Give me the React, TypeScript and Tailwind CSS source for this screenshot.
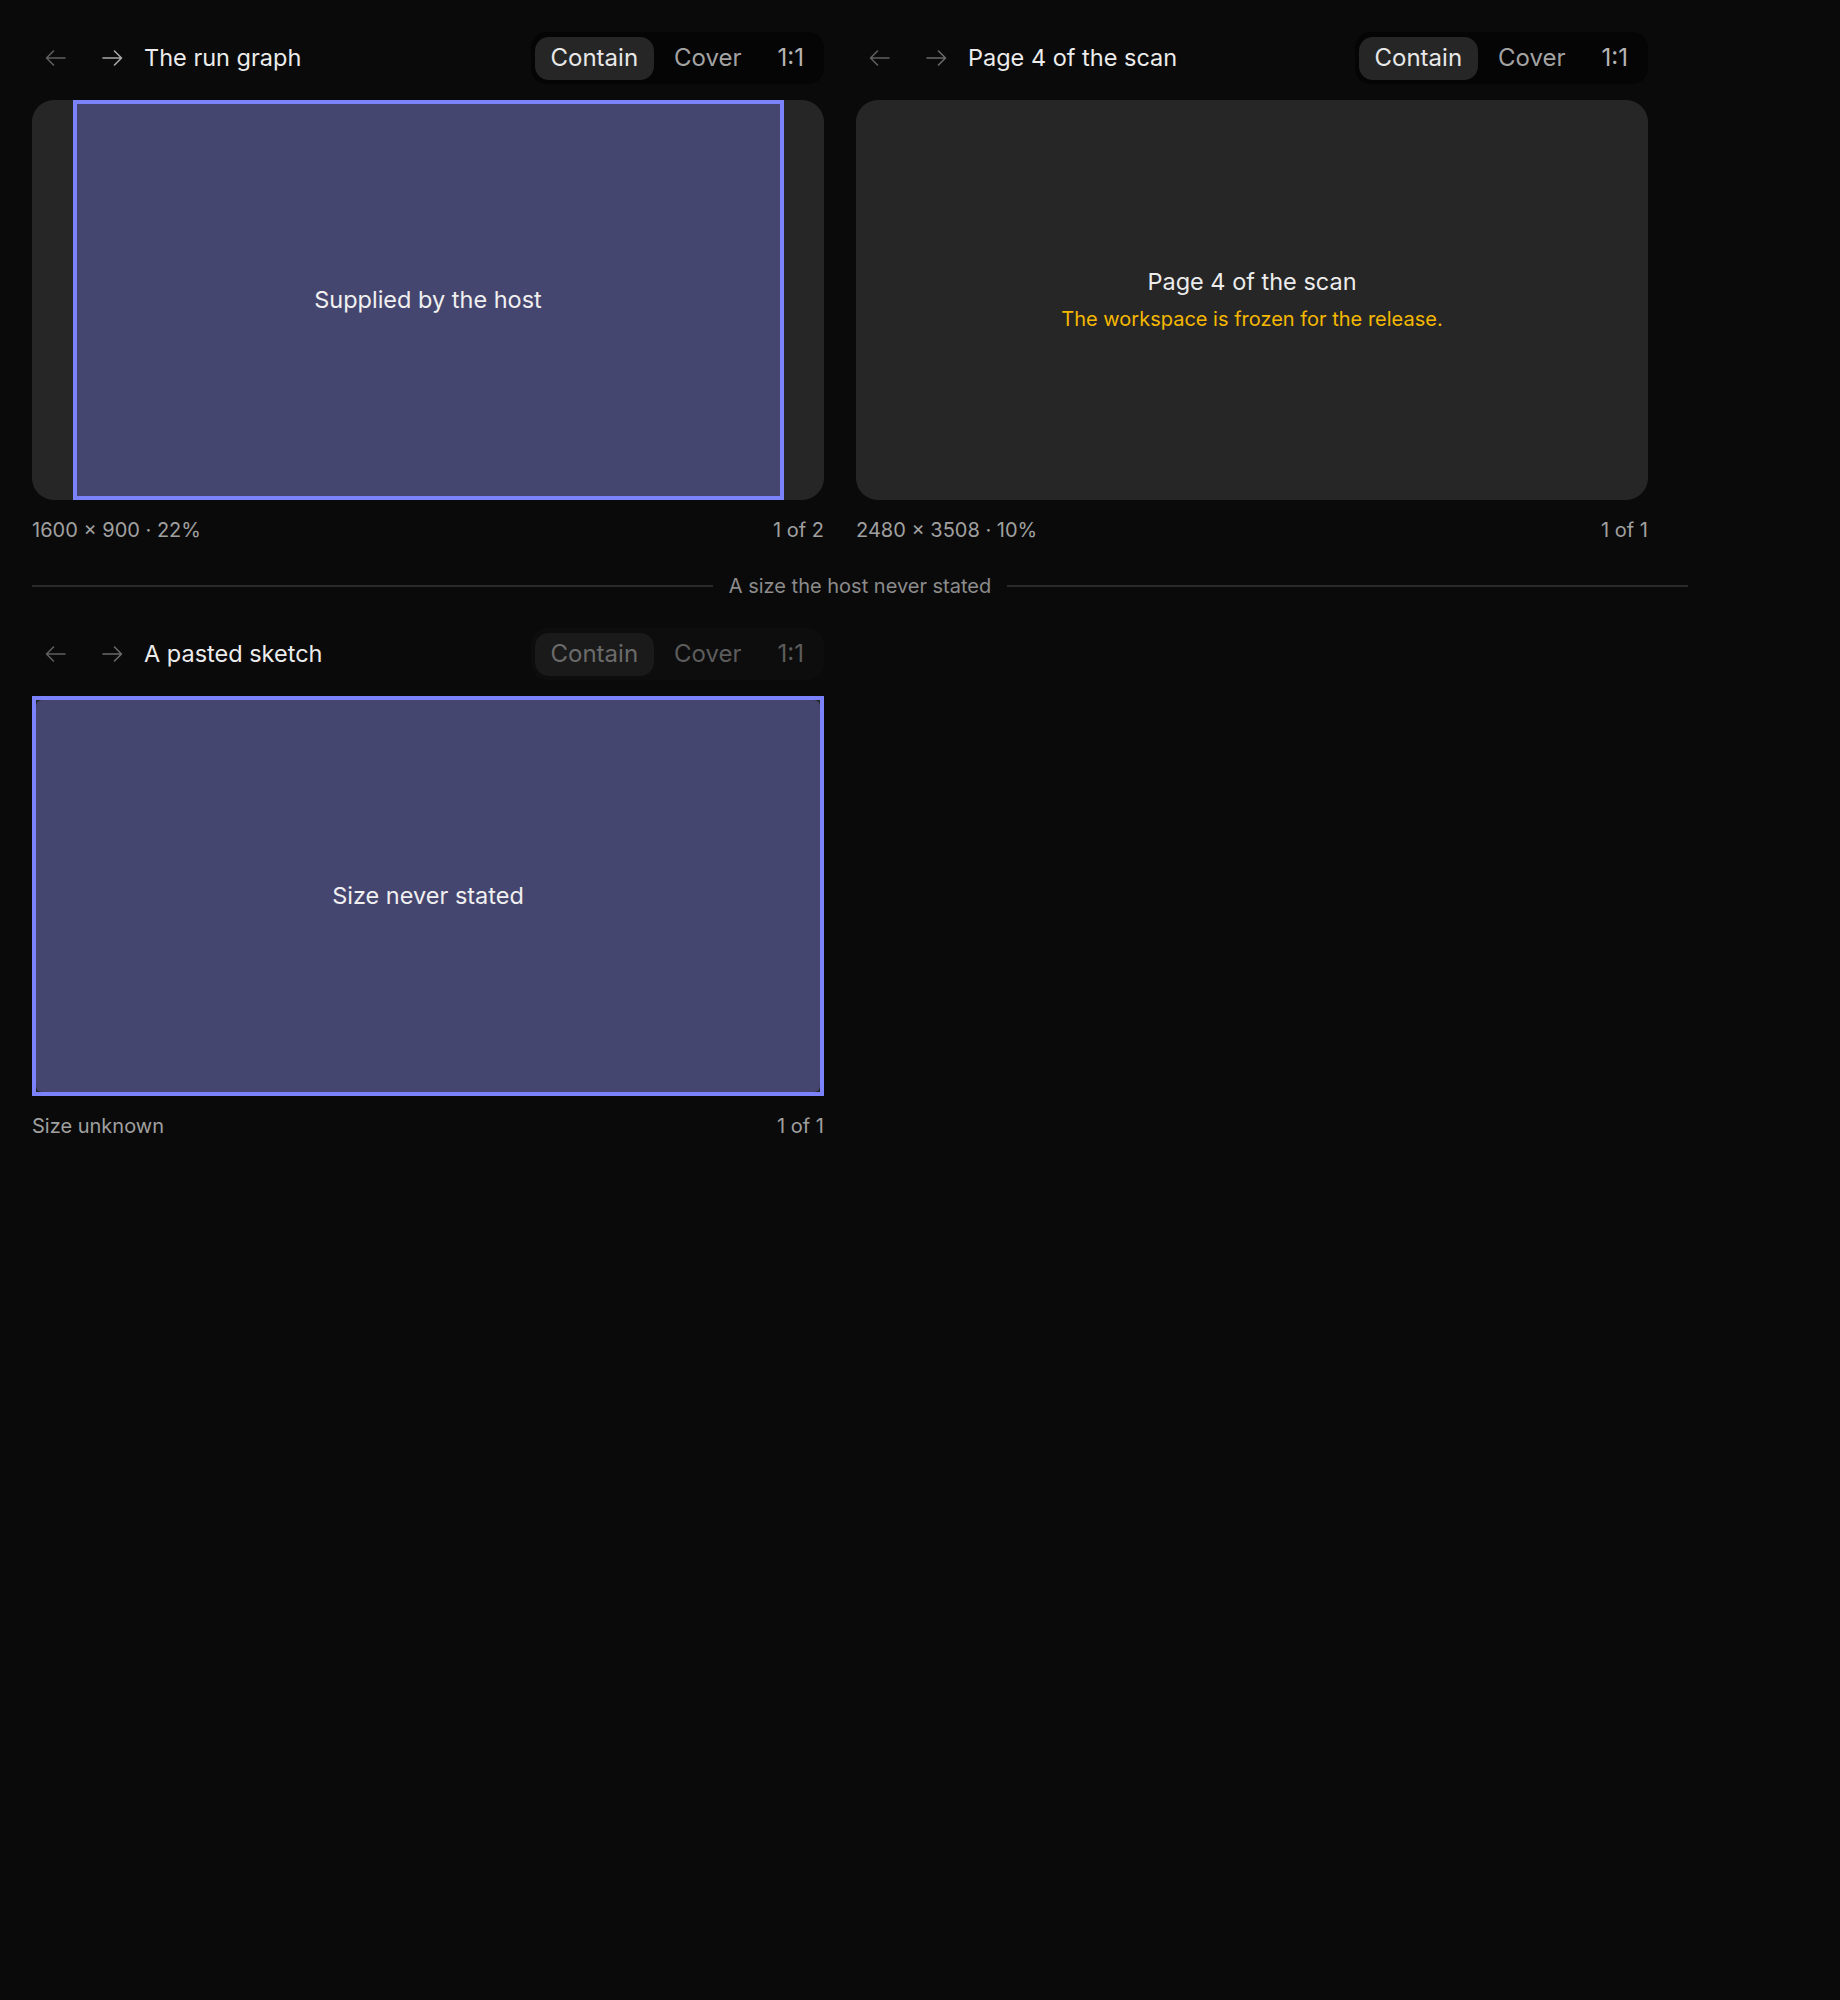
type Fit = "Contain" | "Cover" | "1:1";

const fits: Fit[] = ["Contain", "Cover", "1:1"];

function Arrow({ dir }: { dir: "left" | "right" }) {
  return (
    <svg width="21" height="16" viewBox="0 0 21 16" fill="none" stroke="currentColor" strokeWidth="1.6" strokeLinecap="round" strokeLinejoin="round">
      {dir === "left" ? (
        <path d="M20 8H1.5M8.5 1L1.5 8L8.5 15" />
      ) : (
        <path d="M1 8H19.5M12.5 1L19.5 8L12.5 15" />
      )}
    </svg>
  );
}

function FitSwitch({ active, disabled }: { active: Fit; disabled?: boolean }) {
  return (
    <div className={`flex h-[52px] items-center gap-1 rounded-2xl p-1 ${disabled ? "bg-[#0d0d0d]" : "bg-[#050505]"}`}>
      {fits.map((f) => {
        const on = f === active;
        let tone = "";
        if (disabled) tone = on ? "bg-[#1a1a1a] text-[#6b6b6b]" : "text-[#5c5c5c]";
        else tone = on ? "bg-[#262626] text-[#e8e8e8]" : f === "1:1" ? "text-[#b5b5b5]" : "text-[#a3a3a3]";
        return (
          <button key={f} className={`h-[43px] rounded-[14px] px-4 text-[24px] leading-none ${tone}`}>
            {f}
          </button>
        );
      })}
    </div>
  );
}

function Toolbar({ title, nextOn, disabled }: { title: string; nextOn: boolean; disabled?: boolean }) {
  return (
    <div className="flex h-[52px] items-center justify-between">
      <div className="flex items-center pl-[13px]">
        <span className="text-[#5f5f5f]">
          <Arrow dir="left" />
        </span>
        <span className={`ml-[36px] ${nextOn ? "text-[#a8a8a8]" : "text-[#6a6a6a]"}`}>
          <Arrow dir="right" />
        </span>
        <span className="ml-[21px] text-[23.5px] text-[#ececec]">{title}</span>
      </div>
      <FitSwitch active="Contain" disabled={disabled} />
    </div>
  );
}

function Footer({ left, right }: { left: string; right: string }) {
  return (
    <div className="mt-4 flex justify-between text-[20px] leading-7 text-[#a0a0a0]">
      <span>{left}</span>
      <span>{right}</span>
    </div>
  );
}

export default function App() {
  return (
    <div
      className="min-h-[2000px] bg-[#0a0a0a] px-8 pt-8"
      style={{ fontFamily: "Inter, 'Noto Sans', sans-serif" }}
    >
      <div className="flex w-[1656px] flex-col gap-7">
        <div className="flex flex-wrap gap-8">
          <section className="w-[792px]">
            <Toolbar title="The run graph" nextOn />
            <div className="mt-4 flex h-[400px] justify-center overflow-hidden rounded-[22px] bg-[#262626]">
              <div className="flex h-full w-[711px] items-center justify-center border-4 border-[#7c82fc] bg-[#45466f] text-[23.5px] text-[#f0f0f0]">
                Supplied by the host
              </div>
            </div>
            <Footer left="1600 × 900 · 22%" right="1 of 2" />
          </section>

          <section className="w-[792px]">
            <Toolbar title="Page 4 of the scan" nextOn={false} />
            <div className="mt-4 flex h-[400px] flex-col items-center justify-center rounded-[22px] bg-[#262626]">
              <div className="text-[23.5px] leading-7 text-[#ececec]">Page 4 of the scan</div>
              <div className="mt-[9px] text-[20px] leading-7 text-[#f5b800]">The workspace is frozen for the release.</div>
            </div>
            <Footer left="2480 × 3508 · 10%" right="1 of 1" />
          </section>
        </div>

        <div className="flex items-center gap-4">
          <div className="h-[2px] flex-1 bg-[#2a2a2a]" />
          <span className="text-[20px] leading-7 text-[#8c8c8c]">A size the host never stated</span>
          <div className="h-[2px] flex-1 bg-[#2a2a2a]" />
        </div>

        <section className="w-[792px]">
          <Toolbar title="A pasted sketch" nextOn={false} disabled />
          <div className="mt-4 h-[400px] border-4 border-[#7c82fc] bg-[#262626]">
            <div className="flex h-full items-center justify-center rounded-[6px] bg-[#45466f] text-[23.5px] text-[#f0f0f0]">
              Size never stated
            </div>
          </div>
          <Footer left="Size unknown" right="1 of 1" />
        </section>
      </div>
    </div>
  );
}
